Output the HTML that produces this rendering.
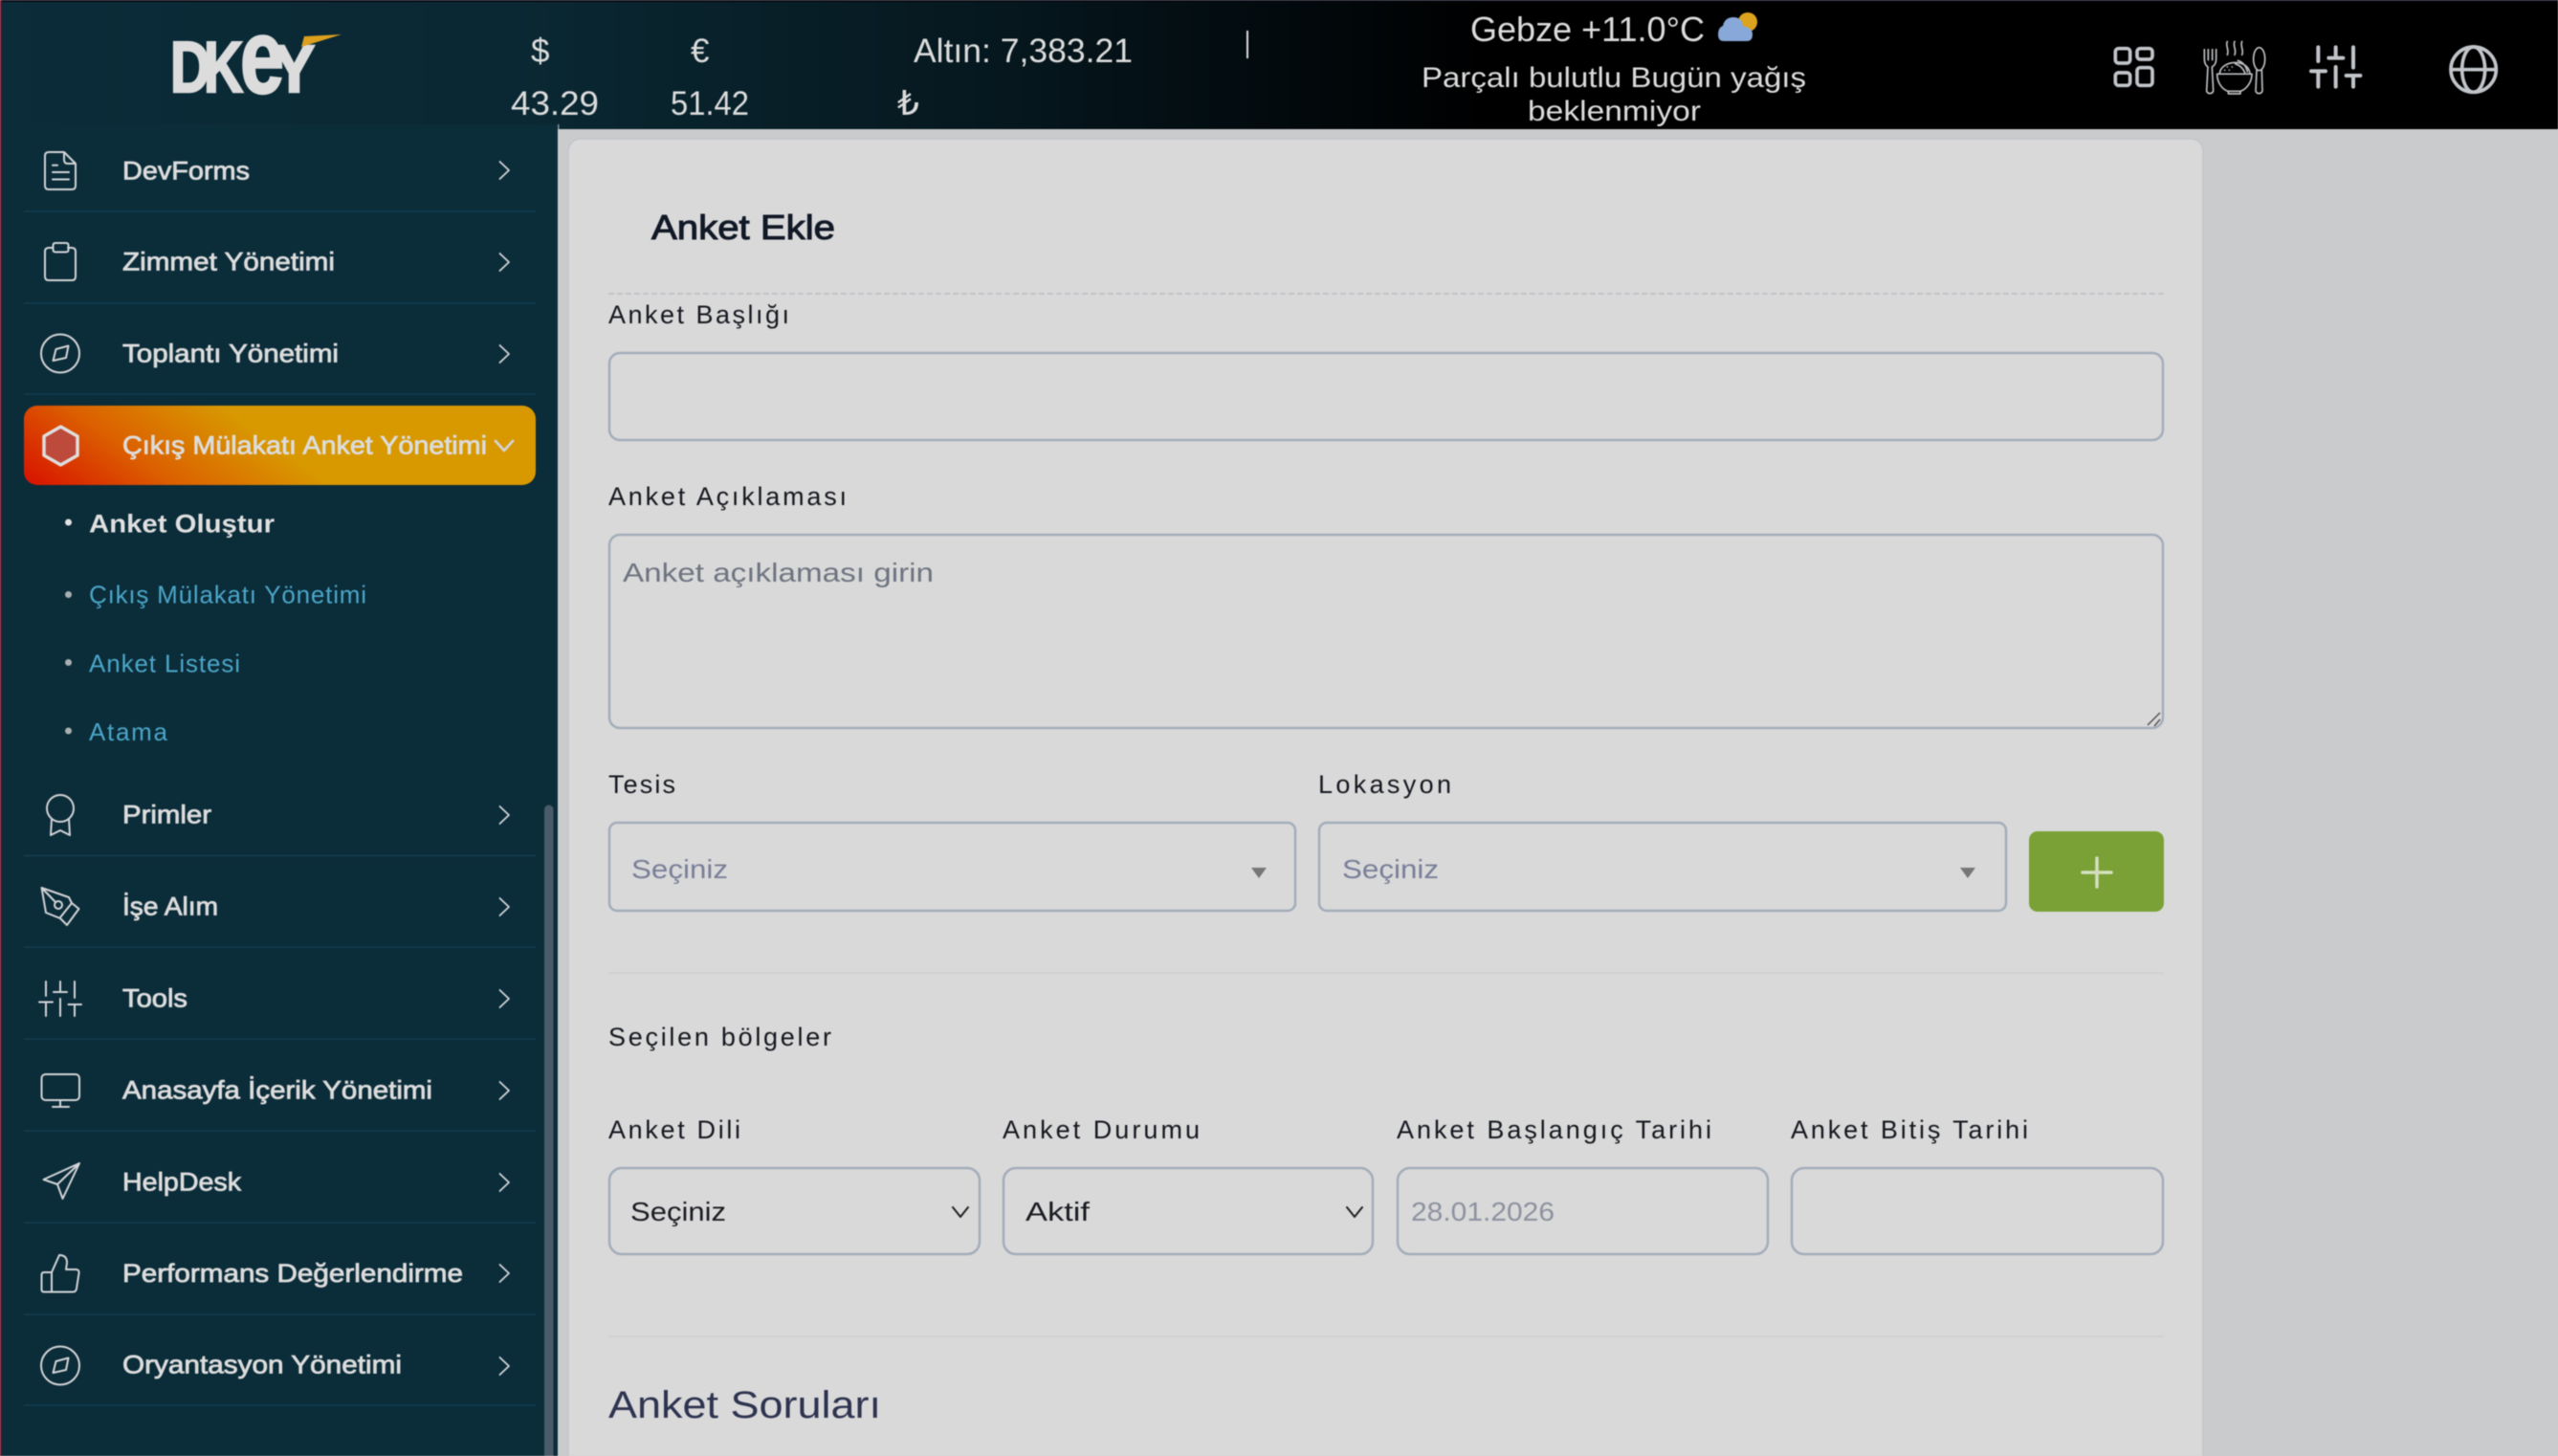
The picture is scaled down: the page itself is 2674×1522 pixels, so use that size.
<!DOCTYPE html>
<html lang="tr">
<head>
<meta charset="utf-8">
<title>Anket Ekle</title>
<style>
html,body{margin:0;padding:0;width:2674px;height:1522px;overflow:hidden;background:#cacbcd}
svg{display:block;font-family:"Liberation Sans","DejaVu Sans",sans-serif;filter:blur(.4px)}
.top{fill:#dcdcdc;font-size:35px}
.nav{fill:#dcdcdc;stroke:#dcdcdc;stroke-width:.8px;font-size:27px}
.sub{fill:#4ba6c8;font-size:26px}
.lab{fill:#15181f;font-size:27px}
.ico{fill:none;stroke:#d2d4d6;stroke-width:2;stroke-linecap:round;stroke-linejoin:round}
.box{fill:none;stroke:#a3adba;stroke-width:2.5}
.chev{fill:none;stroke:#d2d4d6;stroke-width:1.8;stroke-linecap:round;stroke-linejoin:round}
.sep{stroke:#123a4c;stroke-width:2}
</style>
</head>
<body>
<svg xmlns="http://www.w3.org/2000/svg" width="2674" height="1522" viewBox="0 0 2674 1522">
<defs>
<linearGradient id="hd" gradientUnits="userSpaceOnUse" x1="0" y1="0" x2="1560" y2="0">
<stop offset="0" stop-color="#0b2c39"/><stop offset=".35" stop-color="#0a2833"/><stop offset=".68" stop-color="#06171e"/><stop offset="1" stop-color="#000"/>
</linearGradient>
<linearGradient id="act" gradientUnits="userSpaceOnUse" x1="25" y1="507" x2="136" y2="355">
<stop offset="0" stop-color="#d81000"/><stop offset=".5" stop-color="#dc6000"/><stop offset="1" stop-color="#d89800"/>
</linearGradient>
</defs>

<!-- page -->
<rect width="2674" height="1522" fill="#cacbcd"/>
<rect x="0" y="0" width="2674" height="135" fill="url(#hd)"/>
<rect x="0" y="0" width="2674" height="2" fill="#0a0a14"/>
<rect x="0" y="130" width="583" height="1392" fill="#0b2c39"/>
<rect x="0" y="0" width="2" height="1522" fill="#6e0f2c"/>
<rect x="583" y="130" width="1.5" height="5" fill="#8a9095"/>

<!-- logo -->
<g fill="#dcdcdc" stroke="#dcdcdc" stroke-width="2.5" font-weight="bold">
<text x="178" y="96" font-size="75" textLength="42" lengthAdjust="spacingAndGlyphs">D</text>
<text x="213" y="96" font-size="75" textLength="41" lengthAdjust="spacingAndGlyphs">K</text>
<text x="251" y="97" font-size="110" textLength="46" lengthAdjust="spacingAndGlyphs">e</text>
<text x="286" y="96" font-size="70" textLength="43" lengthAdjust="spacingAndGlyphs">Y</text>
</g>
<path d="M315 49 L318 38 L357 36 Z" fill="#dca01e"/>

<!-- currency -->
<text class="top" x="555" y="65">$</text>
<text class="top" x="534" y="120" textLength="92" lengthAdjust="spacingAndGlyphs">43.29</text>
<text class="top" x="722" y="65">€</text>
<text class="top" x="701" y="120" textLength="82" lengthAdjust="spacingAndGlyphs">51.42</text>
<text class="top" x="955" y="65" textLength="229" lengthAdjust="spacingAndGlyphs">Altın: 7,383.21</text>
<text class="top" x="938" y="120" style="font-size:36px">₺</text>
<rect x="1303" y="32" width="2" height="29" fill="#dcdcdc"/>

<!-- weather -->
<text class="top" x="1537" y="43" textLength="245" lengthAdjust="spacingAndGlyphs" style="font-size:36px">Gebze +11.0°C</text>
<ellipse cx="1827" cy="23" rx="10" ry="10" fill="#dda21e"/>
<path d="M1802 43 q-6 0 -6 -7 q0 -7 5 -9 q2 -9 11 -9 q9 0 10 9 q10 2 10 9 q0 7 -6 7 Z" fill="#87a8d8"/>
<text class="top" x="1486" y="91" textLength="402" lengthAdjust="spacingAndGlyphs" style="font-size:30px">Parçalı bulutlu Bugün yağış</text>
<text class="top" x="1597" y="126" textLength="181" lengthAdjust="spacingAndGlyphs" style="font-size:30px">beklenmiyor</text>

<!-- header icons -->
<g transform="translate(2150 20) scale(.33333)">
<g fill="none" stroke="#c1c4c9" stroke-width="11" stroke-linejoin="round">
<rect x="184" y="92" width="46" height="46" rx="10"/>
<rect x="252" y="92" width="48" height="34" rx="10"/>
<rect x="184" y="168" width="46" height="40" rx="10"/>
<rect x="252" y="152" width="48" height="56" rx="10"/>
</g>
<g fill="none" stroke="#bdbfc2" stroke-width="5" stroke-linecap="round" stroke-linejoin="round">
<path d="M463 95 V125 Q463 143 474 150 L470 225 Q472 233 480 233 Q489 233 491 225 L487 150 Q500 143 500 125 V95 M475 95 V128 M488 95 V128"/>
<path d="M503 172 H612 C612 200 592 222 575 226 H538 C520 222 503 200 503 172 Z M538 226 V234 H576 V226"/>
<path d="M511 170 C515 128 600 122 606 170 M560 140 C575 145 585 155 590 168 M568 130 C585 135 595 150 598 165"/>
<path d="M535 150 h.1 M527 160 h.1 M541 160 h.1 M550 150 h.1"/>
<path d="M535 70 C528 85 542 95 535 112 M558 70 C551 85 565 95 558 112 M581 70 C574 85 588 95 581 112"/>
<ellipse cx="635" cy="125" rx="18" ry="36"/>
<path d="M627 160 L624 225 Q626 233 634 233 Q643 233 645 225 L643 160"/>
</g>
<g fill="none" stroke="#c1c4c9" stroke-width="12" stroke-linecap="round">
<path d="M820 88 V132 M798 163 H843 M820 163 V212"/>
<path d="M875 88 V122 M853 122 H898 M875 150 V212"/>
<path d="M930 88 V152 M908 177 H952 M930 177 V212"/>
</g>
<g fill="none" stroke="#c1c4c9" stroke-width="11">
<circle cx="1307" cy="158" r="71"/>
<ellipse cx="1307" cy="158" rx="36" ry="71"/>
<path d="M1236 158 H1378"/>
</g>
</g>

<!-- sidebar separators -->
<g class="sep">
<path d="M25 221 H560 M25 317 H560 M25 412 H560 M25 894.5 H560 M25 990 H560 M25 1086 H560 M25 1182 H560 M25 1278 H560 M25 1374 H560 M25 1469 H560" fill="none"/>
</g>

<!-- active item -->
<rect x="25" y="424" width="535" height="83" rx="14" fill="url(#act)"/>

<!-- nav labels -->
<text class="nav" x="128" y="187.500" textLength="133" lengthAdjust="spacingAndGlyphs">DevForms</text>
<text class="nav" x="128" y="282.500" textLength="222" lengthAdjust="spacingAndGlyphs">Zimmet Yönetimi</text>
<text class="nav" x="128" y="378.500" textLength="226" lengthAdjust="spacingAndGlyphs">Toplantı Yönetimi</text>
<text class="nav" x="128" y="474.500" textLength="381" lengthAdjust="spacingAndGlyphs">Çıkış Mülakatı Anket Yönetimi</text>
<text class="nav" x="128" y="860.500" textLength="93" lengthAdjust="spacingAndGlyphs">Primler</text>
<text class="nav" x="128" y="956.500" textLength="100" lengthAdjust="spacingAndGlyphs">İşe Alım</text>
<text class="nav" x="128" y="1052.500" textLength="68" lengthAdjust="spacingAndGlyphs">Tools</text>
<text class="nav" x="128" y="1148.500" textLength="324" lengthAdjust="spacingAndGlyphs">Anasayfa İçerik Yönetimi</text>
<text class="nav" x="128" y="1244.500" textLength="124" lengthAdjust="spacingAndGlyphs">HelpDesk</text>
<text class="nav" x="128" y="1340" textLength="356" lengthAdjust="spacingAndGlyphs">Performans Değerlendirme</text>
<text class="nav" x="128" y="1435.500" textLength="292" lengthAdjust="spacingAndGlyphs">Oryantasyon Yönetimi</text>

<!-- chevrons -->
<g class="chev">
<path d="M522.500 169 L532 178 L522.500 187"/>
<path d="M522.500 265 L532 274 L522.500 283"/>
<path d="M522.500 361 L532 370 L522.500 379"/>
<path d="M522.500 843 L532 852 L522.500 861"/>
<path d="M522.500 939 L532 948 L522.500 957"/>
<path d="M522.500 1035 L532 1044 L522.500 1053"/>
<path d="M522.500 1131 L532 1140 L522.500 1149"/>
<path d="M522.500 1227 L532 1236 L522.500 1245"/>
<path d="M522.500 1322 L532 1331 L522.500 1340"/>
<path d="M522.500 1419 L532 1428 L522.500 1437"/>
<path d="M518 461 L527 471 L536 461" stroke-width="2.8"/>
</g>

<!-- submenu -->
<circle cx="71.500" cy="546" r="3.500" fill="#e2e2e2"/>
<circle cx="71.500" cy="621.500" r="3.500" fill="#a9b0b2"/>
<circle cx="71.500" cy="692.500" r="3.500" fill="#a9b0b2"/>
<circle cx="71.500" cy="764" r="3.500" fill="#a9b0b2"/>
<text x="93" y="556.500" fill="#e0e0e0" font-weight="bold" font-size="27" textLength="194" lengthAdjust="spacingAndGlyphs">Anket Oluştur</text>
<text class="sub" x="93" y="630.500" textLength="290">Çıkış Mülakatı Yönetimi</text>
<text class="sub" x="93" y="702.500" textLength="158">Anket Listesi</text>
<text class="sub" x="93" y="774" textLength="82">Atama</text>

<!-- nav icons -->
<g class="ico">
<path d="M51 159 H67 L79 171 V194 Q79 198 75 198 H51 Q47 198 47 194 V163 Q47 159 51 159 Z M67 159 V167 Q67 171 71 171 H79 M55 172.700 H60 M55 180 H72 M55 187.500 H72"/>
<path d="M55 259 H51 Q47 259 47 263 V289 Q47 293 51 293 H75 Q79 293 79 289 V263 Q79 259 75 259 H71 M58 254 H69 Q71.500 254 71.500 256.500 V261 Q71.500 263.500 69 263.500 H58 Q55.500 263.500 55.500 261 V256.500 Q55.500 254 58 254 Z"/>
<circle cx="63" cy="369.500" r="20"/>
<path d="M71.500 361.500 L69 374 L55.500 377 L58.500 365 Z"/>
<path d="M63.500 446 L81 456 V476 L63.500 486 L46 476 V456 Z" fill="#bd4a3a" stroke="#dedede" stroke-width="3.500"/>
<circle cx="63" cy="845" r="14"/>
<path d="M54 856 L53 873 L63 868 L73 873 L72 856"/>
<path d="M43.500 928 L72 938 L75 944 L82.500 950 L70 967 L63 960 L48 954 Z M75 944 L63 959 M43.500 928 L58 943"/>
<circle cx="61" cy="946" r="4"/>
<path d="M48 1026 V1041 M41 1047.500 H55 M48 1047.500 V1062 M63 1026 V1037 M56 1037 H70 M63 1044 V1062 M78 1026 V1043 M71.500 1050 H85 M78 1050 V1062"/>
<rect x="43.500" y="1123" width="39.500" height="27" rx="4"/>
<path d="M63 1150 V1157 M55 1157 H72"/>
<path d="M83 1216 L45.500 1233 L60 1238 L65.500 1253 Z M83 1216 L60 1238"/>
<path d="M54 1330 V1350.500 H46 Q43.500 1350.500 43.500 1348 V1333 Q43.500 1330 46 1330 H54 L62 1312 Q70 1312 70 1320 L69 1327 H79 Q83 1327 82.500 1331 L80 1347 Q79.500 1350.500 76 1350.500 H54"/>
<circle cx="63" cy="1427.500" r="20"/>
<path d="M71.500 1419.500 L69 1432 L55.500 1435 L58.500 1423 Z"/>
</g>

<!-- scrollbar -->
<rect x="569" y="841.500" width="9.500" height="690" rx="4.750" fill="#4a5b6b"/>

<!-- card -->
<rect x="594" y="145" width="1709" height="1400" rx="13" fill="#d9d9d9" stroke="#c1c5ca" stroke-width="1.500"/>

<text x="681" y="250" fill="#111826" stroke="#111826" stroke-width="1" font-size="36" textLength="192" lengthAdjust="spacingAndGlyphs">Anket Ekle</text>
<path d="M636 307 H2262" stroke="#c1c4c9" stroke-width="2" stroke-dasharray="6 3" fill="none"/>

<text class="lab" x="636" y="338" textLength="189">Anket Başlığı</text>
<rect class="box" x="637" y="369" width="1624" height="91" rx="11"/>

<text class="lab" x="636" y="528" textLength="249">Anket Açıklaması</text>
<rect class="box" x="637" y="559" width="1624" height="202" rx="11"/>
<text x="651" y="608" fill="#6e7480" font-size="28" textLength="325" lengthAdjust="spacingAndGlyphs">Anket açıklaması girin</text>
<path d="M2245 758 L2258 745 M2252 759 L2258 752" stroke="#555" stroke-width="1.500"/>

<text class="lab" x="636" y="829" textLength="70">Tesis</text>
<text class="lab" x="1378" y="829" textLength="139">Lokasyon</text>
<rect class="box" x="637" y="860" width="717" height="92" rx="8"/>
<rect class="box" x="1379" y="860" width="718" height="92" rx="8"/>
<text x="660" y="918" fill="#7a7f98" font-size="28" textLength="101" lengthAdjust="spacingAndGlyphs">Seçiniz</text>
<text x="1403" y="918" fill="#7a7f98" font-size="28" textLength="101" lengthAdjust="spacingAndGlyphs">Seçiniz</text>
<path d="M1308 907 H1324 L1316 918 Z M2049 907 H2065 L2057 918 Z" fill="#777"/>
<rect x="2121" y="869" width="141" height="84" rx="9" fill="#7aa136"/>
<path d="M2192 897 V927 M2177 912 H2207" stroke="#d5dfc0" stroke-width="3.500" stroke-linecap="round" fill="none"/>
<rect x="636" y="1016" width="1626" height="2" fill="#d0d0d0"/>

<text class="lab" x="636" y="1093" textLength="233">Seçilen bölgeler</text>

<text class="lab" x="636" y="1190" textLength="138">Anket Dili</text>
<text class="lab" x="1048" y="1190" textLength="206">Anket Durumu</text>
<text class="lab" x="1460" y="1190" textLength="329">Anket Başlangıç Tarihi</text>
<text class="lab" x="1872" y="1190" textLength="248">Anket Bitiş Tarihi</text>

<rect class="box" x="637" y="1221" width="387" height="90" rx="13"/>
<rect class="box" x="1049" y="1221" width="386" height="90" rx="13"/>
<rect class="box" x="1461" y="1221" width="387" height="90" rx="13"/>
<rect class="box" x="1873" y="1221" width="388" height="90" rx="13"/>

<text x="659" y="1276" fill="#1a1c22" font-size="28" textLength="100" lengthAdjust="spacingAndGlyphs">Seçiniz</text>
<text x="1072" y="1276" fill="#1a1c22" font-size="28" textLength="67" lengthAdjust="spacingAndGlyphs">Aktif</text>
<path d="M996 1262 L1004 1272 L1012 1262 M1408 1262 L1416 1272 L1424 1262" fill="none" stroke="#222" stroke-width="2" stroke-linecap="round" stroke-linejoin="round"/>
<text x="1475" y="1276" fill="#8d92a0" font-size="28" textLength="150" lengthAdjust="spacingAndGlyphs">28.01.2026</text>

<rect x="636" y="1396" width="1626" height="2" fill="#d0d0d0"/>
<text x="636" y="1482" fill="#2e3450" font-size="40" textLength="285" lengthAdjust="spacingAndGlyphs">Anket Soruları</text>
</svg>
</body>
</html>
